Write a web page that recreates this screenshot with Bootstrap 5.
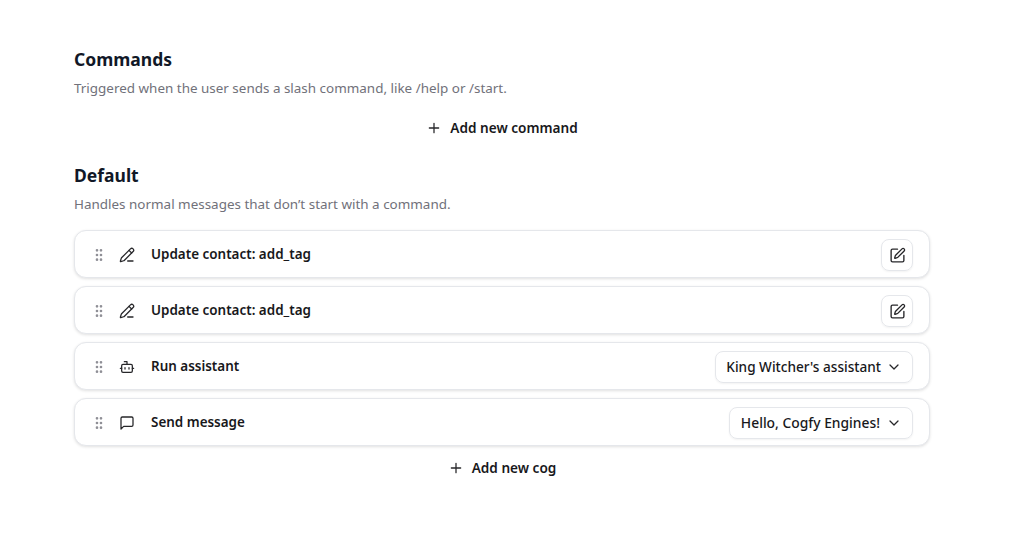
<!DOCTYPE html>
<html lang="en"><head><meta charset="utf-8"><title>Cogs</title>
<link href="https://cdn.jsdelivr.net/npm/bootstrap@5.3.0/dist/css/bootstrap.min.css" rel="stylesheet">
<style>
body{font-family:"Noto Sans","Open Sans",sans-serif;background:#fff;color:#18181b;font-size:14px;overflow:hidden}
.wrap{width:856px;margin-left:74px;padding-top:45px}
.sec-title{font-size:17.5px;font-weight:700;line-height:28px;margin:0;color:#111827}
.sec-sub{font-size:13.45px;line-height:20px;color:#71717a;margin:5px 0 0}
.add-btn{height:36px;font-size:13.6px;font-weight:600;line-height:20px;color:#18181b;gap:8px}
.cog{height:48px;border:1px solid #e5e7eb;border-radius:12px;box-shadow:0 1px 3px rgba(0,0,0,.12);padding:2px 16px 0;background:#fff}
.cog-label{font-size:13.45px;font-weight:600;line-height:20px;margin-left:16px;margin-bottom:2px}
.ico{width:16px;height:16px;fill:none;stroke:currentColor;stroke-width:1.9;stroke-linecap:round;stroke-linejoin:round;flex:none;color:#27272a}
.grip{color:#8f8f96;stroke-width:2;margin-left:0;margin-right:12px}
.tool{width:32px;height:32px;border:1px solid #e5e7eb;border-radius:8px;box-shadow:0 1px 2px rgba(0,0,0,.05);padding:0}
.tool .ico{width:17px;height:17px}
.pick{height:32px;border:1px solid #e5e7eb;border-radius:8px;box-shadow:0 1px 2px rgba(0,0,0,.05);padding:0 10px;font-size:13.6px;font-weight:500;color:#18181b;gap:5px}
.pick-wide{font-size:13.85px;padding-left:11px;gap:6px}
.gap-top{margin-top:15px}
.add-top{margin-top:12px}
</style></head><body>
<main class="wrap">
<h2 class="sec-title">Commands</h2>
<p class="sec-sub">Triggered when the user sends a slash command, like /help or /start.</p>
<div class="d-flex justify-content-center add-top">
<button class="btn add-btn d-inline-flex align-items-center border-0 p-0"><svg class="ico" viewBox="0 0 24 24"><path d="M5 12h14M12 5v14"/></svg>Add new command</button>
</div>
<h2 class="sec-title gap-top">Default</h2>
<p class="sec-sub">Handles normal messages that don’t start with a command.</p>
<div class="d-flex flex-column gap-2 mt-3">
<div class="cog d-flex align-items-center"><svg class="ico grip" viewBox="0 0 24 24"><circle cx="9" cy="5" r="1"/><circle cx="15" cy="5" r="1"/><circle cx="9" cy="12" r="1"/><circle cx="15" cy="12" r="1"/><circle cx="9" cy="19" r="1"/><circle cx="15" cy="19" r="1"/></svg><svg class="ico" viewBox="0 0 24 24"><path d="M13 21h8"/><path d="M21.17 6.81a2.82 2.82 0 0 0-3.99-3.99L3.84 16.17a2 2 0 0 0-.5.83l-1.32 4.35a.5.5 0 0 0 .62.62l4.35-1.32a2 2 0 0 0 .83-.5z"/><path d="m15 5 4 4"/></svg><span class="cog-label">Update contact: add_tag</span><button class="btn tool ms-auto d-flex align-items-center justify-content-center"><svg class="ico" viewBox="0 0 24 24"><path d="M12 3H5a2 2 0 0 0-2 2v14a2 2 0 0 0 2 2h14a2 2 0 0 0 2-2v-7"/><path d="M18.38 2.63a2.12 2.12 0 1 1 3 3L12.36 14.64a2 2 0 0 1-.85.5l-2.87.84a.5.5 0 0 1-.62-.62l.84-2.87a2 2 0 0 1 .5-.85z"/></svg></button></div>
<div class="cog d-flex align-items-center"><svg class="ico grip" viewBox="0 0 24 24"><circle cx="9" cy="5" r="1"/><circle cx="15" cy="5" r="1"/><circle cx="9" cy="12" r="1"/><circle cx="15" cy="12" r="1"/><circle cx="9" cy="19" r="1"/><circle cx="15" cy="19" r="1"/></svg><svg class="ico" viewBox="0 0 24 24"><path d="M13 21h8"/><path d="M21.17 6.81a2.82 2.82 0 0 0-3.99-3.99L3.84 16.17a2 2 0 0 0-.5.83l-1.32 4.35a.5.5 0 0 0 .62.62l4.35-1.32a2 2 0 0 0 .83-.5z"/><path d="m15 5 4 4"/></svg><span class="cog-label">Update contact: add_tag</span><button class="btn tool ms-auto d-flex align-items-center justify-content-center"><svg class="ico" viewBox="0 0 24 24"><path d="M12 3H5a2 2 0 0 0-2 2v14a2 2 0 0 0 2 2h14a2 2 0 0 0 2-2v-7"/><path d="M18.38 2.63a2.12 2.12 0 1 1 3 3L12.36 14.64a2 2 0 0 1-.85.5l-2.87.84a.5.5 0 0 1-.62-.62l.84-2.87a2 2 0 0 1 .5-.85z"/></svg></button></div>
<div class="cog d-flex align-items-center"><svg class="ico grip" viewBox="0 0 24 24"><circle cx="9" cy="5" r="1"/><circle cx="15" cy="5" r="1"/><circle cx="9" cy="12" r="1"/><circle cx="15" cy="12" r="1"/><circle cx="9" cy="19" r="1"/><circle cx="15" cy="19" r="1"/></svg><svg class="ico" viewBox="0 0 24 24"><path d="M12 8V4H8"/><rect width="16" height="12" x="4" y="8" rx="2"/><path d="M2 14h2M20 14h2M15 13v2M9 13v2"/></svg><span class="cog-label">Run assistant</span><button class="btn pick ms-auto d-flex align-items-center">King Witcher's assistant<svg class="ico" viewBox="0 0 24 24"><path d="m6 9 6 6 6-6"/></svg></button></div>
<div class="cog d-flex align-items-center"><svg class="ico grip" viewBox="0 0 24 24"><circle cx="9" cy="5" r="1"/><circle cx="15" cy="5" r="1"/><circle cx="9" cy="12" r="1"/><circle cx="15" cy="12" r="1"/><circle cx="9" cy="19" r="1"/><circle cx="15" cy="19" r="1"/></svg><svg class="ico" viewBox="0 0 24 24"><path d="M21 15a2 2 0 0 1-2 2H7l-4 4V5a2 2 0 0 1 2-2h14a2 2 0 0 1 2 2z"/></svg><span class="cog-label">Send message</span><button class="btn pick pick-wide ms-auto d-flex align-items-center">Hello, Cogfy Engines!<svg class="ico" viewBox="0 0 24 24"><path d="m6 9 6 6 6-6"/></svg></button></div>
</div>
<div class="d-flex justify-content-center mt-1">
<button class="btn add-btn d-inline-flex align-items-center border-0 p-0"><svg class="ico" viewBox="0 0 24 24"><path d="M5 12h14M12 5v14"/></svg>Add new cog</button>
</div>
</main>
<script src="https://cdn.jsdelivr.net/npm/bootstrap@5.3.0/dist/js/bootstrap.bundle.min.js"></script>
</body></html>
